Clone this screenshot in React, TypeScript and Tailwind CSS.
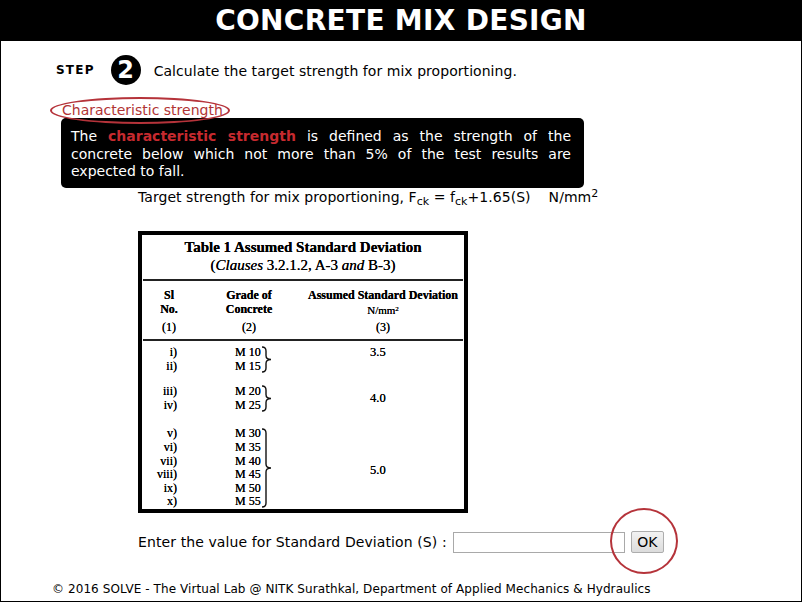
import React from "react";

const sans = "font-['DejaVu_Sans','Verdana',sans-serif]";
const serif = "font-['Liberation_Serif','Times_New_Roman',serif]";

function Brace({ h }: { h: number }) {
  const m = h / 2;
  return (
    <svg width="12" height={h} viewBox={`0 0 12 ${h}`} className="block">
      <path
        d={`M1 1 Q5 1 5 5 L5 ${m - 4} Q5 ${m} 10 ${m} Q5 ${m} 5 ${m + 4} L5 ${h - 5} Q5 ${h - 1} 1 ${h - 1}`}
        fill="none"
        stroke="#111"
        strokeWidth="1.4"
      />
    </svg>
  );
}

function Group({
  rows,
  value,
  braceH,
  valueShift,
}: {
  rows: [string, string][];
  value: string;
  braceH: number;
  valueShift: string;
}) {
  return (
    <div className="flex items-center">
      <div className="w-[35px] flex flex-col items-end leading-[13.6px] text-[12px]">
        {rows.map(([r]) => (
          <div key={r}>{r}</div>
        ))}
      </div>
      <div className="w-[58px]" />
      <div className="flex flex-col leading-[13.6px] text-[12px] w-[26px]">
        {rows.map(([, g]) => (
          <div key={g} className="whitespace-nowrap">{g}</div>
        ))}
      </div>
      <Brace h={braceH} />
      <div className="flex-1 flex text-[12.5px]">
        <span className={`ml-[97px] ${valueShift}`}>{value}</span>
      </div>
    </div>
  );
}

export default function App() {
  return (
    <div className={`w-[802px] h-[602px] box-border border-l border-r border-b border-black bg-white flex flex-col relative ${sans} text-black`}>
      <div className="h-[41px] bg-black flex items-center justify-center">
        <span className="text-white font-bold text-[28px] tracking-[0.3px] leading-none">
          CONCRETE MIX DESIGN
        </span>
      </div>

      <div className="relative flex flex-col pl-[55px]">
        <div className="mt-[14px] h-[30px] flex items-center">
          <span className="font-bold text-[12px] tracking-[1.2px]">STEP</span>
          <span className="ml-[16px] w-[30px] h-[30px] rounded-full bg-black text-white flex items-center justify-center font-bold text-[24px] leading-none">
            2
          </span>
          <span className="ml-[13px] mt-[2px] text-[14px] tracking-[0.05px]">
            Calculate the target strength for mix proportioning.
          </span>
        </div>

        <div className="mt-[17px] ml-[6px] h-[16px] leading-[16px] text-[14px] text-[#b13435] whitespace-nowrap">
          Characteristic strength
        </div>

        <div className="mt-[70px] ml-[82px] h-[18px] leading-[18px] text-[14px] tracking-[0.05px] whitespace-nowrap">
          Target strength for mix proportioning, F<sub className="text-[11px]">ck</sub> = f
          <sub className="text-[11px]">ck</sub>+1.65(S)&nbsp;&nbsp;&nbsp; N/mm<sup className="text-[11px]">2</sup>
        </div>

        <div className={`mt-[25px] ml-[82px] w-[330px] h-[282px] border-[4px] border-black ${serif} flex flex-col [text-shadow:0_0_0.3px_#000]`}>
          <div className="mt-[3px] text-center font-bold text-[15px] leading-[18px]">
            Table 1 Assumed Standard Deviation
          </div>
          <div className="text-center text-[15px] leading-[18px]">
            (<i>Clauses</i> 3.2.1.2, A-3 <i>and</i> B-3)
          </div>
          <div className="mt-[5px] mx-[1px] h-[2px] bg-[#222]" />
          <div className="mt-[7px] flex font-bold text-[12px] leading-[14px]">
            <div className="w-[54px] flex flex-col items-center">
              <div>Sl</div>
              <div>No.</div>
              <div className="mt-[4px] font-normal">(1)</div>
            </div>
            <div className="w-[106px] flex flex-col items-center">
              <div>Grade of</div>
              <div>Concrete</div>
              <div className="mt-[4px] font-normal">(2)</div>
            </div>
            <div className="flex-1 flex flex-col items-center">
              <div>Assumed Standard Deviation</div>
              <div className="font-normal text-[11px] mt-[2px] leading-[13px]">
                N/mm<sup className="text-[7px]">2</sup>
              </div>
              <div className="mt-[3px] font-normal">(3)</div>
            </div>
          </div>
          <div className="mt-[5px] mx-[1px] h-[2px] bg-[#222]" />
          <div className="mt-[5px] flex flex-col">
            <Group rows={[["i)", "M 10"], ["ii)", "M 15"]]} value="3.5" braceH={27} valueShift="-mt-[14px]" />
            <div className="h-[12px]" />
            <Group rows={[["iii)", "M 20"], ["iv)", "M 25"]]} value="4.0" braceH={27} valueShift="" />
            <div className="h-[15px]" />
            <Group
              rows={[
                ["v)", "M 30"],
                ["vi)", "M 35"],
                ["vii)", "M 40"],
                ["viii)", "M 45"],
                ["ix)", "M 50"],
                ["x)", "M 55"],
              ]}
              value="5.0"
              braceH={80}
              valueShift="mt-[4px]"
            />
          </div>
        </div>

        <div className="mt-[18px] ml-[82px] h-[22px] flex items-center">
          <span className="text-[14px] tracking-[0.1px] whitespace-nowrap">
            Enter the value for Standard Deviation (S) :
          </span>
          <input
            type="text"
            className="ml-[6px] w-[172px] h-[21px] border border-[#a9a9a9] bg-white outline-none"
          />
          <button className="ml-[6px] w-[33px] h-[22px] border border-[#adadad] rounded-[2px] bg-gradient-to-b from-[#f2f2f2] to-[#dcdcdc] text-[14px] leading-none flex items-center justify-center">
            OK
          </button>
        </div>

        <div className="mt-[28px] -ml-[4px] h-[16px] leading-[16px] text-[12px] tracking-[0.08px] whitespace-nowrap">
          © 2016 SOLVE - The Virtual Lab @ NITK Surathkal, Department of Applied Mechanics &amp; Hydraulics
        </div>

        {/* tooltip */}
        <div className="absolute left-[60px] top-[77px] w-[523px] h-[70px] bg-black rounded-[5px] text-white text-[14px] leading-[17.5px] pt-[10px] pl-[10px] pr-[13px]">
          <div className="text-justify [text-align-last:justify] whitespace-nowrap">
            The <span className="font-bold text-[#c62a2f]">characteristic strength</span> is defined as the strength of the
          </div>
          <div className="text-justify [text-align-last:justify]">
            concrete below which not more than 5% of the test results are
          </div>
          <div>expected to fall.</div>
        </div>

        {/* annotation ellipses */}
        <div className="absolute left-[49px] top-[56px] w-[180px] h-[27px] rounded-[50%] border-[2.5px] border-[#b5333a] pointer-events-none" />
        <div className="absolute left-[609px] top-[467px] w-[68px] h-[66px] rounded-[50%] border-[2.5px] border-[#b5333a] pointer-events-none" />
      </div>
    </div>
  );
}
